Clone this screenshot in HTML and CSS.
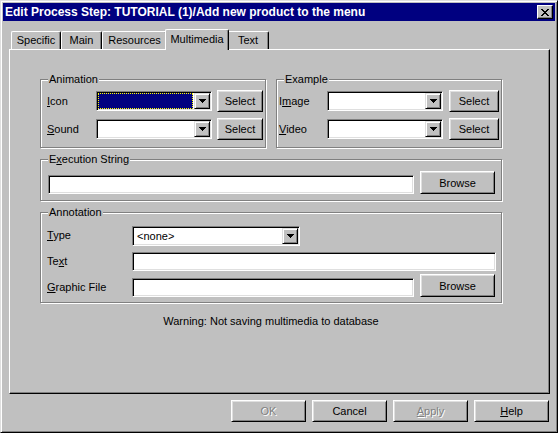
FILE: index.html
```html
<!DOCTYPE html>
<html>
<head>
<meta charset="utf-8">
<link rel="stylesheet" href="styles.css">
</head>
<body>
<div class="window">
  <div class="titlebar">
    <span class="title">Edit Process Step: TUTORIAL (1)/Add new product to the menu</span>
    <span class="close">
      <svg width="8" height="7" viewBox="0 0 8 7" shape-rendering="crispEdges">
        <path d="M0 0h2v1H0zM6 0h2v1H6zM1 1h2v1H1zM5 1h2v1H5zM2 2h4v1H2zM3 3h2v1H3zM2 4h4v1H2zM1 5h2v1H1zM5 5h2v1H5zM0 6h2v1H0zM6 6h2v1H6z" fill="#000"/>
      </svg>
    </span>
  </div>

  <div class="tabs">
    <div class="tab t-specific">Specific</div>
    <div class="tab t-main">Main</div>
    <div class="tab t-res">Resources</div>
    <div class="tab t-multi active">Multimedia</div>
    <div class="tab t-text">Text</div>
  </div>

  <div class="panel">
    <div class="toprow">
      <div class="group">
        <div class="gtitle">Animation</div>
        <div class="gbody anim">
          <div class="frow">
            <span class="lbl"><u>I</u>con</span>
            <div class="combo">
              <div class="cval focus"><span class="selfill"></span></div>
              <span class="dd"><svg width="7" height="4" viewBox="0 0 7 4" shape-rendering="crispEdges"><path d="M0 0h7v1H0zM1 1h5v1H1zM2 2h3v1H2zM3 3h1v1H3z" fill="#000"/></svg></span>
            </div>
            <button class="btn sel">Select</button>
          </div>
          <div class="frow r2">
            <span class="lbl"><u>S</u>ound</span>
            <div class="combo">
              <div class="cval"></div>
              <span class="dd"><svg width="7" height="4" viewBox="0 0 7 4" shape-rendering="crispEdges"><path d="M0 0h7v1H0zM1 1h5v1H1zM2 2h3v1H2zM3 3h1v1H3z" fill="#000"/></svg></span>
            </div>
            <button class="btn sel">Select</button>
          </div>
        </div>
      </div>

      <div class="group">
        <div class="gtitle">Example</div>
        <div class="gbody example">
          <div class="frow">
            <span class="lbl">I<u>m</u>age</span>
            <div class="combo">
              <div class="cval"></div>
              <span class="dd"><svg width="7" height="4" viewBox="0 0 7 4" shape-rendering="crispEdges"><path d="M0 0h7v1H0zM1 1h5v1H1zM2 2h3v1H2zM3 3h1v1H3z" fill="#000"/></svg></span>
            </div>
            <button class="btn sel">Select</button>
          </div>
          <div class="frow r2">
            <span class="lbl"><u>V</u>ideo</span>
            <div class="combo">
              <div class="cval"></div>
              <span class="dd"><svg width="7" height="4" viewBox="0 0 7 4" shape-rendering="crispEdges"><path d="M0 0h7v1H0zM1 1h5v1H1zM2 2h3v1H2zM3 3h1v1H3z" fill="#000"/></svg></span>
            </div>
            <button class="btn sel">Select</button>
          </div>
        </div>
      </div>
    </div>

    <div class="group wide g-exec">
      <div class="gtitle">E<u>x</u>ecution String</div>
      <div class="gbody exec">
        <div class="brow">
          <div class="field f-long"></div>
          <button class="btn browse">Browse</button>
        </div>
      </div>
    </div>

    <div class="group wide g-annot">
      <div class="gtitle">Annotation</div>
      <div class="gbody annot">
        <div class="arow a-type">
          <span class="lbl"><u>T</u>ype</span>
          <div class="combo c-type">
            <div class="cval"><span class="ctext">&lt;none&gt;</span></div>
            <span class="dd"><svg width="7" height="4" viewBox="0 0 7 4" shape-rendering="crispEdges"><path d="M0 0h7v1H0zM1 1h5v1H1zM2 2h3v1H2zM3 3h1v1H3z" fill="#000"/></svg></span>
          </div>
        </div>
        <div class="arow a-text">
          <span class="lbl">Te<u>x</u>t</span>
          <div class="field f-text"></div>
        </div>
        <div class="arow a-graphic">
          <span class="lbl"><u>G</u>raphic File</span>
          <div class="field f-graphic"></div>
          <button class="btn browse">Browse</button>
        </div>
      </div>
    </div>

    <div class="warning">Warning: Not saving multimedia to database</div>
  </div>

  <div class="footer">
    <button class="btn fbtn disabled">OK</button>
    <button class="btn fbtn">Cancel</button>
    <button class="btn fbtn disabled"><u>A</u>pply</button>
    <button class="btn fbtn"><u>H</u>elp</button>
  </div>
</div>
</body>
</html>
```

FILE: styles.css
```css
* { box-sizing: border-box; }

body {
  margin: 0;
  background: #ffffff;
  font-family: "Liberation Sans", Arial, sans-serif;
  font-size: 11px;
  color: #000;
}

u { text-decoration: underline; text-underline-offset: 1px; }

.window {
  width: 558px;
  height: 433px;
  background: #c0c0c0;
  border: 1px solid;
  border-color: #dfdfdf #000 #000 #dfdfdf;
  box-shadow: inset 1px 1px #fff, inset -1px -1px #808080;
  padding: 2px;
  display: flex;
  flex-direction: column;
}

.titlebar {
  height: 18px;
  background: #000080;
  color: #fff;
  display: flex;
  align-items: center;
  justify-content: space-between;
  padding: 0 2px 0 2px;
}

.title {
  font-weight: bold;
  font-size: 12px;
  white-space: nowrap;
}

.close {
  width: 16px;
  height: 14px;
  background: #c0c0c0;
  border: 1px solid;
  border-color: #fff #000 #000 #fff;
  box-shadow: inset -1px -1px #808080;
  display: flex;
  align-items: center;
  justify-content: center;
}

/* Tabs */
.tabs {
  display: flex;
  align-items: flex-end;
  height: 20px;
  margin: 8px 5px 0 8px;
}

.tab {
  height: 18px;
  background: #c0c0c0;
  border-top: 1px solid #fff;
  border-left: 1px solid #fff;
  border-right: 1px solid #000;
  box-shadow: inset -1px 0 #808080;
  border-radius: 2px 2px 0 0;
  display: flex;
  align-items: center;
  justify-content: center;
  line-height: 13px;
  white-space: nowrap;
}

.t-specific { width: 50px; }
.t-main { width: 41px; }
.t-res { width: 65px; }
.t-multi { width: 60px; }
.t-text { width: 42px; }

.tab.active {
  width: 64px;
  height: 21px;
  margin: 0 -2px -1px -2px;
  padding-bottom: 2px;
  position: relative;
  z-index: 1;
}

/* Panel */
.panel {
  height: 345px;
  margin: 0 5px 0 6px;
  border: 1px solid;
  border-color: #fff #000 #000 #fff;
  box-shadow: inset -1px -1px #808080;
  padding: 29px 0 0 30px;
}

.toprow {
  display: flex;
  gap: 10px;
  width: 462px;
}

.group {
  width: 226px;
  border: 1px solid #808080;
  box-shadow: inset 1px 1px #fff, 1px 1px #fff;
}

.group.wide {
  width: 462px;
  margin-top: 11px;
}

.gtitle {
  width: max-content;
  margin: -7px 0 0 7px;
  padding: 0 1px;
  line-height: 13px;
  background: #c0c0c0;
}

.gbody.anim { padding: 4px 2px 7px 6px; }
.gbody.example { padding: 4px 2px 7px 2px; }
.gbody.exec { padding: 5px 6px 6px 7px; }
.gbody.annot { padding: 7px 5px 5px 6px; }

.frow {
  display: flex;
  align-items: center;
  height: 22px;
}
.frow.r2 { margin-top: 6px; }

.lbl { line-height: 19px; white-space: nowrap; }
.anim .lbl { width: 49px; }
.example .lbl { width: 48px; }
.annot .lbl { width: 85px; }

/* Buttons */
.btn {
  height: 22px;
  padding: 0;
  background: #c0c0c0;
  border: 1px solid;
  border-color: #fff #000 #000 #fff;
  box-shadow: inset 1px 1px #dfdfdf, inset -1px -1px #808080;
  font: inherit;
  color: #000;
}

.btn.sel { width: 46px; margin-left: 5px; }
.example .btn.sel { width: 50px; margin-left: 6px; }

.btn.browse { width: 75px; height: 23px; margin-left: 6px; }

.btn.disabled {
  color: #808080;
  text-shadow: 1px 1px #fff;
}

/* Sunken fields */
.field, .combo {
  background: #fff;
  border: 1px solid;
  border-color: #808080 #fff #fff #808080;
  box-shadow: inset 1px 1px #000, inset -1px -1px #dfdfdf;
}

.field { height: 19px; }

.combo {
  width: 116px;
  height: 20px;
  padding: 1px;
  display: flex;
}

.cval {
  flex: 1;
  display: flex;
  align-items: center;
  padding-left: 1px;
}

.cval.focus { padding: 0 1px 0 0; }

.selfill {
  display: block;
  width: 100%;
  height: 100%;
  background: #000080;
  border: 1px dotted #ffff00;
}

.dd {
  width: 16px;
  height: 16px;
  background: #c0c0c0;
  border: 1px solid;
  border-color: #dfdfdf #000 #000 #dfdfdf;
  box-shadow: inset 1px 1px #fff, inset -1px -1px #808080;
  display: flex;
  align-items: center;
  justify-content: center;
}

.brow {
  display: flex;
  align-items: flex-end;
}

.f-long { width: 366px; }

/* Annotation rows */
.arow {
  display: flex;
  align-items: flex-end;
}

.a-type { height: 20px; align-items: center; }
.a-type .lbl { line-height: 14px; align-self: flex-start; padding-top: 2px; }
.c-type { width: 168px; }
.ctext { padding-left: 2px; }

.a-text { margin-top: 6px; }
.f-text { width: 364px; }

.a-graphic { margin-top: 3px; height: 23px; }
.f-graphic { width: 282px; }

.warning {
  width: 462px;
  margin-top: 12px;
  text-align: center;
  line-height: 13px;
}

/* Footer */
.footer {
  display: flex;
  justify-content: flex-end;
  gap: 6px;
  margin: 6px 6px 0 0;
}

.fbtn { width: 75px; }
```
